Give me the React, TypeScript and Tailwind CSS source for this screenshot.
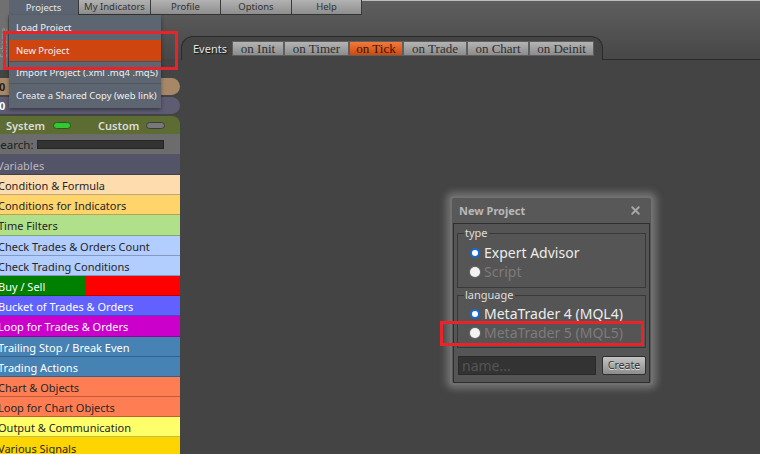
import React from 'react';
import { X } from 'lucide-react';

const menuTabs = [
  { label: 'Projects', w: 'w-[70px]', active: true },
  { label: 'My Indicators', w: 'w-[72px]' },
  { label: 'Profile', w: 'w-[70px]' },
  { label: 'Options', w: 'w-[71px]' },
  { label: 'Help', w: 'w-[70px]' },
];

const eventTabs = [
  { label: 'on Init', w: 'w-[52px]' },
  { label: 'on Timer', w: 'w-[65px]' },
  { label: 'on Tick', w: 'w-[54px]', active: true },
  { label: 'on Trade', w: 'w-[64px]' },
  { label: 'on Chart', w: 'w-[62px]' },
  { label: 'on Deinit', w: 'w-[65px]' },
];

const blocks = [
  { label: 'Condition & Formula', cls: 'bg-[#ffdcad] text-[#262626]' },
  { label: 'Conditions for Indicators', cls: 'bg-[#ffd56b] text-[#262626]' },
  { label: 'Time Filters', cls: 'bg-[#b1e08b] text-[#262626]' },
  { label: 'Check Trades & Orders Count', cls: 'bg-[#b2cdff] text-[#262626]' },
  { label: 'Check Trading Conditions', cls: 'bg-[#b2cdff] text-[#262626]' },
  { label: 'Buy / Sell', cls: 'bg-[linear-gradient(to_right,#008000_86px,#ff0000_86px)] text-white' },
  { label: 'Bucket of Trades & Orders', cls: 'bg-[#6161ff] text-white' },
  { label: 'Loop for Trades & Orders', cls: 'bg-[#cb00cb] text-white' },
  { label: 'Trailing Stop / Break Even', cls: 'bg-[#4682b4] text-white' },
  { label: 'Trading Actions', cls: 'bg-[#4682b4] text-white' },
  { label: 'Chart & Objects', cls: 'bg-[#ff7d52] text-[#262626]' },
  { label: 'Loop for Chart Objects', cls: 'bg-[#ff7d52] text-[#262626]' },
  { label: 'Output & Communication', cls: 'bg-[#ffff69] text-[#262626]' },
  { label: 'Various Signals', cls: 'bg-[#ffd500] text-[#262626]' },
];

const Radio = ({ on }: { on?: boolean }) =>
  on ? (
    <span className="w-[10px] h-[10px] rounded-full bg-white border-[2.5px] border-[#1769d6] shrink-0" />
  ) : (
    <span className="w-[10px] h-[10px] rounded-full bg-[#f2f2f2] shadow-[0_0_2px_#999] shrink-0" />
  );

const Option = ({ label, on }: { label: string; on?: boolean }) => (
  <div className="h-[19px] flex items-center gap-[4px] ml-[6px]">
    <Radio on={on} />
    <span className={`text-[14px] leading-none ${on ? 'text-[#ececec]' : 'text-[#7c7c7c]'}`}>{label}</span>
  </div>
);

export default function App() {
  return (
    <div className="relative w-[760px] h-[454px] overflow-hidden flex flex-col font-['Noto_Sans',sans-serif] bg-[linear-gradient(to_bottom,#5f5f5f_0px,#474747_59px,#444444_59px)]">
      {/* top menu */}
      <div className="flex h-[15px] shrink-0">
        <div className="w-[9px] bg-[#707070]" />
        {menuTabs.map((t) => (
          <div
            key={t.label}
            className={`${t.w} flex items-center justify-center text-[9.5px] leading-none whitespace-nowrap border-r border-[#3a3a3a] ${
              t.active
                ? 'bg-[#5b6470] text-[#e6e6e6]'
                : 'bg-[linear-gradient(to_bottom,#b2b2b2,#8e8e8e)] text-[#333] border-b border-b-[#333]'
            }`}
          >
            {t.label}
          </div>
        ))}
        <div className="flex-1 border-t border-[#bdbdbd]" />
      </div>

      <div className="flex flex-1 min-h-0">
        {/* sidebar */}
        <aside className="w-[180px] shrink-0 flex flex-col">
          <div className="h-[63px] shrink-0 flex">
            <div className="w-[8px] h-[55px] bg-[#707070] flex items-center justify-center overflow-hidden">
              <span className="[writing-mode:vertical-rl] rotate-180 text-[8px] text-[#9a9a9a] leading-none">Scheme</span>
            </div>
          </div>
          <div className="h-[17px] shrink-0 bg-[#a68867] rounded-r-[9px] flex items-center">
            <span className="text-[11px] font-bold text-[#222] leading-none -ml-[1px]">0</span>
          </div>
          <div className="h-[2px] shrink-0" />
          <div className="h-[17px] shrink-0 bg-[#5d5c73] rounded-r-[9px] flex items-center">
            <span className="text-[11px] font-bold text-white leading-none -ml-[1px]">0</span>
          </div>
          <div className="h-[2px] shrink-0" />
          <div className="h-[18px] shrink-0 bg-[#5c6c33] rounded-tr-[8px] flex items-center text-[11px] font-semibold text-[#dcdcdc] leading-none pt-[1px]">
            <span className="ml-[6px] w-[40px]">System</span>
            <span className="ml-[7px] w-[18px] h-[7px] rounded-full bg-[#33c833] border border-[#2a5a1a]" />
            <span className="ml-[27px] w-[42px]">Custom</span>
            <span className="ml-[6px] w-[19px] h-[7px] rounded-full bg-[#787878] border border-[#3c3c3c]" />
          </div>
          <div className="h-[20px] shrink-0 bg-[#6c6c6c] flex items-center">
            <span className="text-[11.5px] text-[#1e1e1e] leading-none -ml-[6px] pt-[1px]">Search:</span>
            <span className="ml-[4px] w-[127px] h-[9px] bg-[#333] border border-[#252525]" />
          </div>
          <div className="h-[21px] shrink-0 bg-[#545468] flex items-center border-b border-black/25">
            <span className="text-[11px] text-[#b8b8c0] leading-none -ml-[3px] pt-[2px]">Variables</span>
          </div>
          {blocks.map((b) => (
            <div key={b.label} className={`h-[20.2px] shrink-0 flex items-center border-b border-black/25 ${b.cls}`}>
              <span className="text-[11px] leading-none -ml-[2px] pt-[2px] whitespace-nowrap">{b.label}</span>
            </div>
          ))}
        </aside>

        {/* main */}
        <main className="flex-1 flex flex-col min-w-0">
          <div className="h-[45px] shrink-0 flex items-end">
            <div className="ml-[1px] w-[422px] h-[24px] rounded-t-[12px] border border-b-0 border-[#2a2a2a] bg-[#444] flex items-start pt-[4px] pl-[11px]">
              <span className="w-[39px] h-[15px] flex items-center text-[11px] text-[#e2e2e2] leading-none [text-shadow:1px_1px_1px_#111]">
                Events
              </span>
              {eventTabs.map((t) => (
                <div
                  key={t.label}
                  className={`${t.w} h-[15px] flex items-center justify-center border border-[#5e5e5e] font-['Liberation_Serif',serif] text-[13px] leading-none ${
                    t.active
                      ? 'bg-[linear-gradient(to_bottom,#f27a3a,#cc4a12)] text-[#3a1405]'
                      : 'bg-[linear-gradient(to_bottom,#b4b4b4,#8c8c8c)] text-[#2e2e2e]'
                  }`}
                >
                  {t.label}
                </div>
              ))}
            </div>
            <div className="flex-1 h-full border-b border-[#2a2a2a]" />
          </div>

          <div className="flex-1 pl-[270px] pt-[136px]">
            {/* New Project dialog */}
            <div className="w-[203px] h-[189px] bg-[#585858] border-[2px] border-[#707070] rounded-[4px] shadow-[0_0_7px_4px_rgba(150,150,150,0.55)] flex flex-col">
              <div className="h-[25px] shrink-0 flex items-center justify-between pl-[7px] pr-[9px]">
                <span className="text-[11px] font-bold text-[#b8b8b8] leading-none">New Project</span>
                <X size={13} strokeWidth={3.5} className="text-[#a8a8a8]" />
              </div>
              <div className="flex-1 mx-[1px] border border-[#2e2e2e] bg-[#555] px-[3px] pt-[2px] flex flex-col">
                <fieldset className="border border-[#393939] px-[6px] pb-[6px]">
                  <legend className="text-[11px] text-[#dedede] leading-[14px] px-[1px]">type</legend>
                  <div className="pt-[3px]">
                    <Option label="Expert Advisor" on />
                    <Option label="Script" />
                  </div>
                </fieldset>
                <fieldset className="border border-[#393939] px-[6px] pb-[5px]">
                  <legend className="text-[11px] text-[#dedede] leading-[14px] px-[1px]">language</legend>
                  <div className="pt-[2px]">
                    <Option label="MetaTrader 4 (MQL4)" on />
                    <Option label="MetaTrader 5 (MQL5)" />
                  </div>
                </fieldset>
                <div className="mt-[8px] flex items-center gap-[6px] pl-[1px]">
                  <div className="w-[138px] h-[19px] bg-[#333] border border-[#2a2a2a] flex items-center pl-[3px]">
                    <span className="text-[14px] text-[#555] leading-none">name...</span>
                  </div>
                  <div className="w-[44px] h-[19px] rounded-[2px] border border-[#2e2e2e] bg-[linear-gradient(to_bottom,#c4c4c4,#8c8c8c)] flex items-center justify-center text-[10.5px] text-[#333] leading-none [text-shadow:0_1px_0_#e0e0e0]">
                    Create
                  </div>
                </div>
              </div>
            </div>
          </div>
        </main>
      </div>

      {/* Projects dropdown */}
      <div className="absolute left-[9px] top-[15px] w-[152px] h-[93px] bg-[#5c6570] shadow-[0_2px_4px_rgba(0,0,0,0.4)] flex flex-col text-[9.5px] text-[#f0f0f0] leading-none whitespace-nowrap">
        <div className="h-[25px] flex items-center pl-[7px]">Load Project</div>
        <div className="h-[21px] flex items-center pl-[7px] bg-[#cf4510]">New Project</div>
        <div className="h-[1px] bg-[#4a525c]" />
        <div className="h-[22px] flex items-center pl-[7px] border-b border-[#4f5862]">Import Project (.xml .mq4 .mq5)</div>
        <div className="flex-1 flex items-center pl-[7px]">Create a Shared Copy (web link)</div>
      </div>

      {/* annotation boxes */}
      <div className="absolute left-[3px] top-[31px] w-[175px] h-[39px] border-[3px] border-[#e8232a]" />
      <div className="absolute left-[440px] top-[321px] w-[204px] h-[25px] border-[3px] border-[#e8232a]" />
    </div>
  );
}
